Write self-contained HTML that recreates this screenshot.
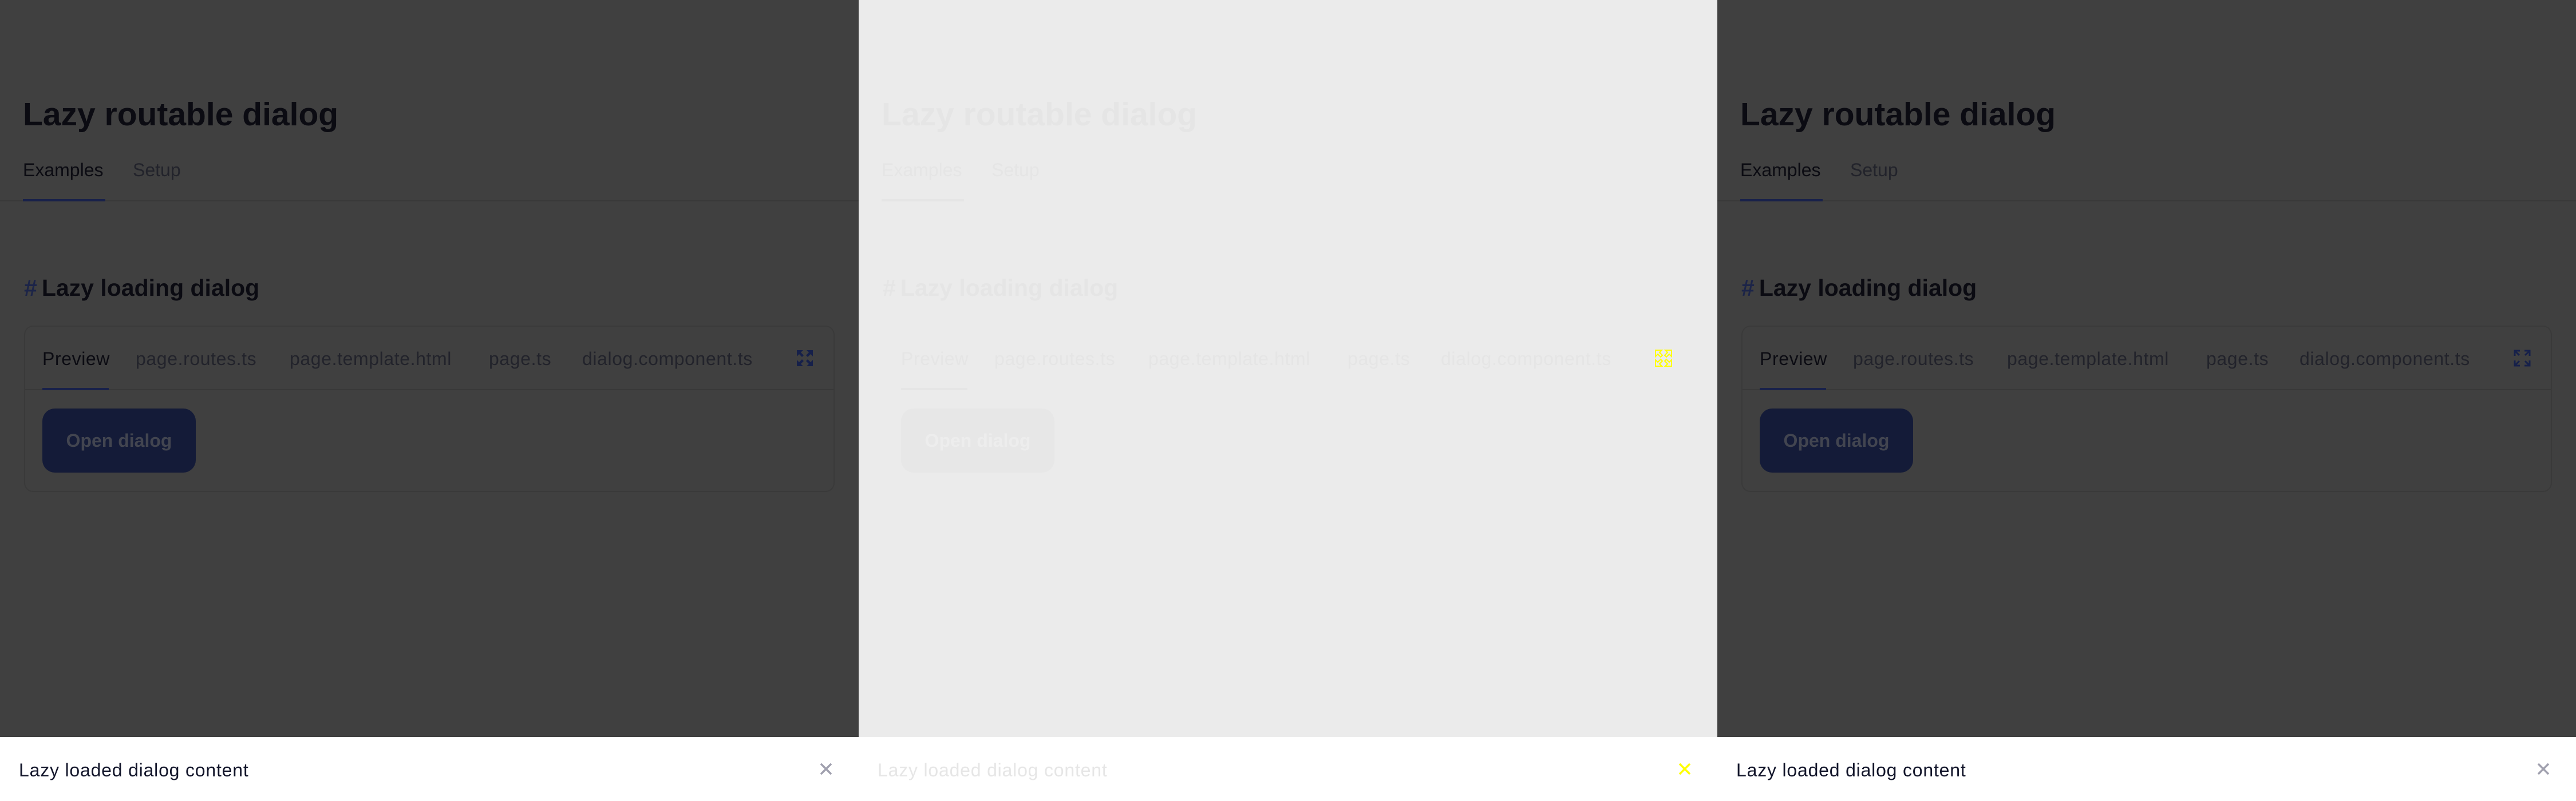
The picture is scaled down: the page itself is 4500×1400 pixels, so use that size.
<!DOCTYPE html>
<html><head><meta charset="utf-8"><style>
*{margin:0;padding:0;box-sizing:border-box}
body{width:4500px;height:1400px;overflow:hidden;font-family:"Liberation Sans",sans-serif;position:relative;background:#404040}
.p{position:absolute;top:0;width:1500px;height:1400px;overflow:hidden}
.p>*{position:absolute;white-space:nowrap}
.t{left:40px;top:167px;font-size:57px;font-weight:bold;line-height:66px}
.tab{top:278px;font-size:32px;line-height:38px}
.ul{height:4px}
.hr{height:2px}
.h2{left:42px;top:480px;font-size:41px;font-weight:bold;line-height:46px}
.h2 b{margin-right:8px}
.card{left:42px;top:569px;width:1416px;height:291px;border-radius:16px;border:2px solid}
.ct{top:608px;font-size:32px;line-height:38px;letter-spacing:0.6px}
.btn{left:74px;top:714px;width:268px;height:112px;border-radius:22px;font-size:32px;font-weight:bold;line-height:112px;text-align:center}
.dlg{left:0;top:1288px;width:1500px;height:112px;background:#fff}
.dt{left:33px;top:1327px;font-size:32px;line-height:38px;letter-spacing:0.8px}
.x{left:1432px;top:1333px}
.ic{left:1390px;top:610px}
.d{background:#404040}
.d .t,.d .h2 span{color:#0b0b12}
.d .tab.a,.d .ct.a{color:#0b0b12}
.d .tab,.d .ct{color:#22232b}
.d .ul{background:#18214a}
.d .hr{background:#393939}
.d .h2 b{color:#1c2448}
.d .card{border-color:#3a3a3a}
.d .btn{background:#141b38;color:#424550}
.d .dt{color:#12152a}
.l{background:#ebebeb}
.l .t,.l .h2,.l .tab,.l .ct,.l .h2 b{color:#e5e5e5}
.l .ul{background:#e5e5e5}
.l .hr{background:#ebebeb}
.l .card{border-color:#ebebeb}
.l .btn{background:#e7e7e7;color:#ededed}
.l .dt{color:#e6e6e6}
</style></head><body>

<div class="p d" style="left:0">
<div class="t">Lazy routable dialog</div>
<div class="tab a" style="left:40px">Examples</div>
<div class="tab" style="left:232px">Setup</div>
<div class="hr" style="left:0;top:350px;width:1500px"></div>
<div class="ul" style="left:40px;top:348px;width:144px"></div>
<div class="h2"><b>#</b><span>Lazy loading dialog</span></div>
<div class="card"></div>
<div class="ct a" style="left:74px">Preview</div>
<div class="ct" style="left:237px">page.routes.ts</div>
<div class="ct" style="left:506px">page.template.html</div>
<div class="ct" style="left:854px">page.ts</div>
<div class="ct" style="left:1017px">dialog.component.ts</div>
<svg class="ic" width="32" height="32" viewBox="0 0 32 32"><g fill="#16204a"><path d="M2 2h11l-4 4 5 5-3 3-5-5-4 4z"/><path d="M30 2v11l-4-4-5 5-3-3 5-5-4-4z"/><path d="M2 30v-11l4 4 5-5 3 3-5 5 4 4z"/><path d="M30 30h-11l4-4-5-5 3-3 5 5 4-4z"/></g></svg>
<div class="hr" style="left:44px;top:680px;width:1412px"></div>
<div class="ul" style="left:74px;top:678px;width:116px"></div>
<div class="btn">Open dialog</div>
<div class="dlg"></div>
<div class="dt">Lazy loaded dialog content</div>
<svg class="x" width="22" height="22" viewBox="0 0 22 22"><path d="M2 2L20 20M20 2L2 20" stroke="#a0a0ae" stroke-width="3.5"/></svg>
</div>

<div class="p l" style="left:1500px">
<div class="t">Lazy routable dialog</div>
<div class="tab" style="left:40px">Examples</div>
<div class="tab" style="left:232px">Setup</div>
<div class="ul" style="left:40px;top:348px;width:144px"></div>
<div class="h2"><b>#</b><span>Lazy loading dialog</span></div>
<div class="ct" style="left:74px">Preview</div>
<div class="ct" style="left:237px">page.routes.ts</div>
<div class="ct" style="left:506px">page.template.html</div>
<div class="ct" style="left:854px">page.ts</div>
<div class="ct" style="left:1017px">dialog.component.ts</div>
<svg class="ic" width="32" height="32" viewBox="0 0 32 32"><g fill="none" stroke="#ffff00" stroke-width="2"><path d="M2 2h11l-4 4 5 5-3 3-5-5-4 4z"/><path d="M30 2v11l-4-4-5 5-3-3 5-5-4-4z"/><path d="M2 30v-11l4 4 5-5 3 3-5 5 4 4z"/><path d="M30 30h-11l4-4-5-5 3-3 5 5 4-4z"/></g></svg>
<div class="ul" style="left:74px;top:678px;width:116px"></div>
<div class="btn">Open dialog</div>
<div class="dlg"></div>
<div class="dt">Lazy loaded dialog content</div>
<svg class="x" width="22" height="22" viewBox="0 0 22 22"><path d="M2 2L20 20M20 2L2 20" stroke="#ffff00" stroke-width="3.5"/></svg>
</div>

<div class="p d" style="left:3000px">
<div class="t">Lazy routable dialog</div>
<div class="tab a" style="left:40px">Examples</div>
<div class="tab" style="left:232px">Setup</div>
<div class="hr" style="left:0;top:350px;width:1500px"></div>
<div class="ul" style="left:40px;top:348px;width:144px"></div>
<div class="h2"><b>#</b><span>Lazy loading dialog</span></div>
<div class="card"></div>
<div class="ct a" style="left:74px">Preview</div>
<div class="ct" style="left:237px">page.routes.ts</div>
<div class="ct" style="left:506px">page.template.html</div>
<div class="ct" style="left:854px">page.ts</div>
<div class="ct" style="left:1017px">dialog.component.ts</div>
<svg class="ic" width="32" height="32" viewBox="0 0 32 32"><g fill="none" stroke="#16204a" stroke-width="3"><path d="M3 12V3h9M3 3l8 8"/><path d="M29 12V3h-9M29 3l-8 8"/><path d="M3 20v9h9M3 29l8-8"/><path d="M29 20v9h-9M29 29l-8-8"/></g></svg>
<div class="hr" style="left:44px;top:680px;width:1412px"></div>
<div class="ul" style="left:74px;top:678px;width:116px"></div>
<div class="btn">Open dialog</div>
<div class="dlg"></div>
<div class="dt">Lazy loaded dialog content</div>
<svg class="x" width="22" height="22" viewBox="0 0 22 22"><path d="M2 2L20 20M20 2L2 20" stroke="#a0a0ae" stroke-width="3.5"/></svg>
</div>

</body></html>
